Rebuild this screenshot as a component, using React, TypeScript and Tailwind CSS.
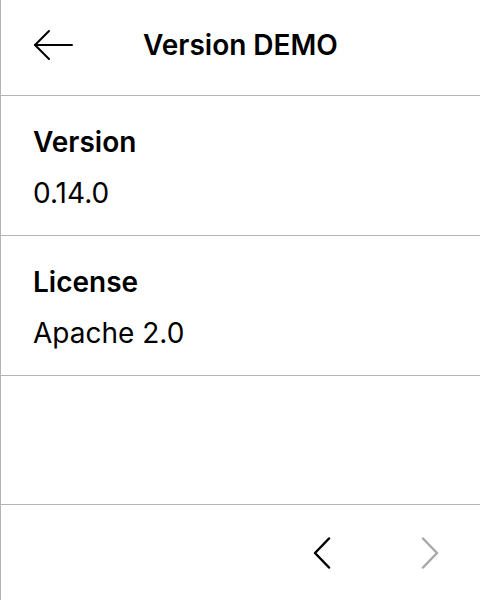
export default function App() {
  return (
    <div
      className="flex h-[600px] w-[480px] flex-col border-l border-[#b4b4b4] bg-white text-black"
      style={{ fontFamily: "Inter, 'Noto Sans', sans-serif" }}
    >
      {/* Header */}
      <div className="flex h-[96px] shrink-0 items-center border-b border-[#b4b4b4] pb-[5px] pl-[32px]">
        <svg width="40" height="32" viewBox="0 0 40 32" fill="none" stroke="black" strokeWidth="2" strokeLinecap="round" strokeLinejoin="round">
          <path d="M39 16H2" />
          <path d="M16 2L2 16L16 30" />
        </svg>
        <h1 className="ml-[70px] text-[28px] font-semibold leading-[28px]">Version DEMO</h1>
      </div>

      {/* Info rows */}
      <div className="flex h-[140px] shrink-0 flex-col border-b border-[#b4b4b4] px-[32px] pt-[30px]">
        <div className="text-[28px] font-semibold leading-[32px]">Version</div>
        <div className="mt-[19px] text-[28px] leading-[32px]">0.14.0</div>
      </div>
      <div className="flex h-[140px] shrink-0 flex-col border-b border-[#b4b4b4] px-[32px] pt-[30px]">
        <div className="text-[28px] font-semibold leading-[32px]">License</div>
        <div className="mt-[19px] text-[28px] leading-[32px]">Apache 2.0</div>
      </div>

      <div className="flex-1" />

      {/* Pager */}
      <div className="flex h-[96px] shrink-0 items-center justify-end border-t border-[#b4b4b4]">
        <button className="flex h-[95px] w-[54px] items-center justify-center">
          <svg width="18" height="32" viewBox="0 0 18 32" fill="none" stroke="black" strokeWidth="2.5" strokeLinecap="round" strokeLinejoin="round">
            <path d="M16 1.5L2 16L16 30.5" />
          </svg>
        </button>
        <button className="ml-[54px] mr-[23px] flex h-[95px] w-[54px] items-center justify-center" disabled>
          <svg width="18" height="32" viewBox="0 0 18 32" fill="none" stroke="#a8a8a8" strokeWidth="2.5" strokeLinecap="round" strokeLinejoin="round">
            <path d="M2 1.5L16 16L2 30.5" />
          </svg>
        </button>
      </div>
    </div>
  );
}
